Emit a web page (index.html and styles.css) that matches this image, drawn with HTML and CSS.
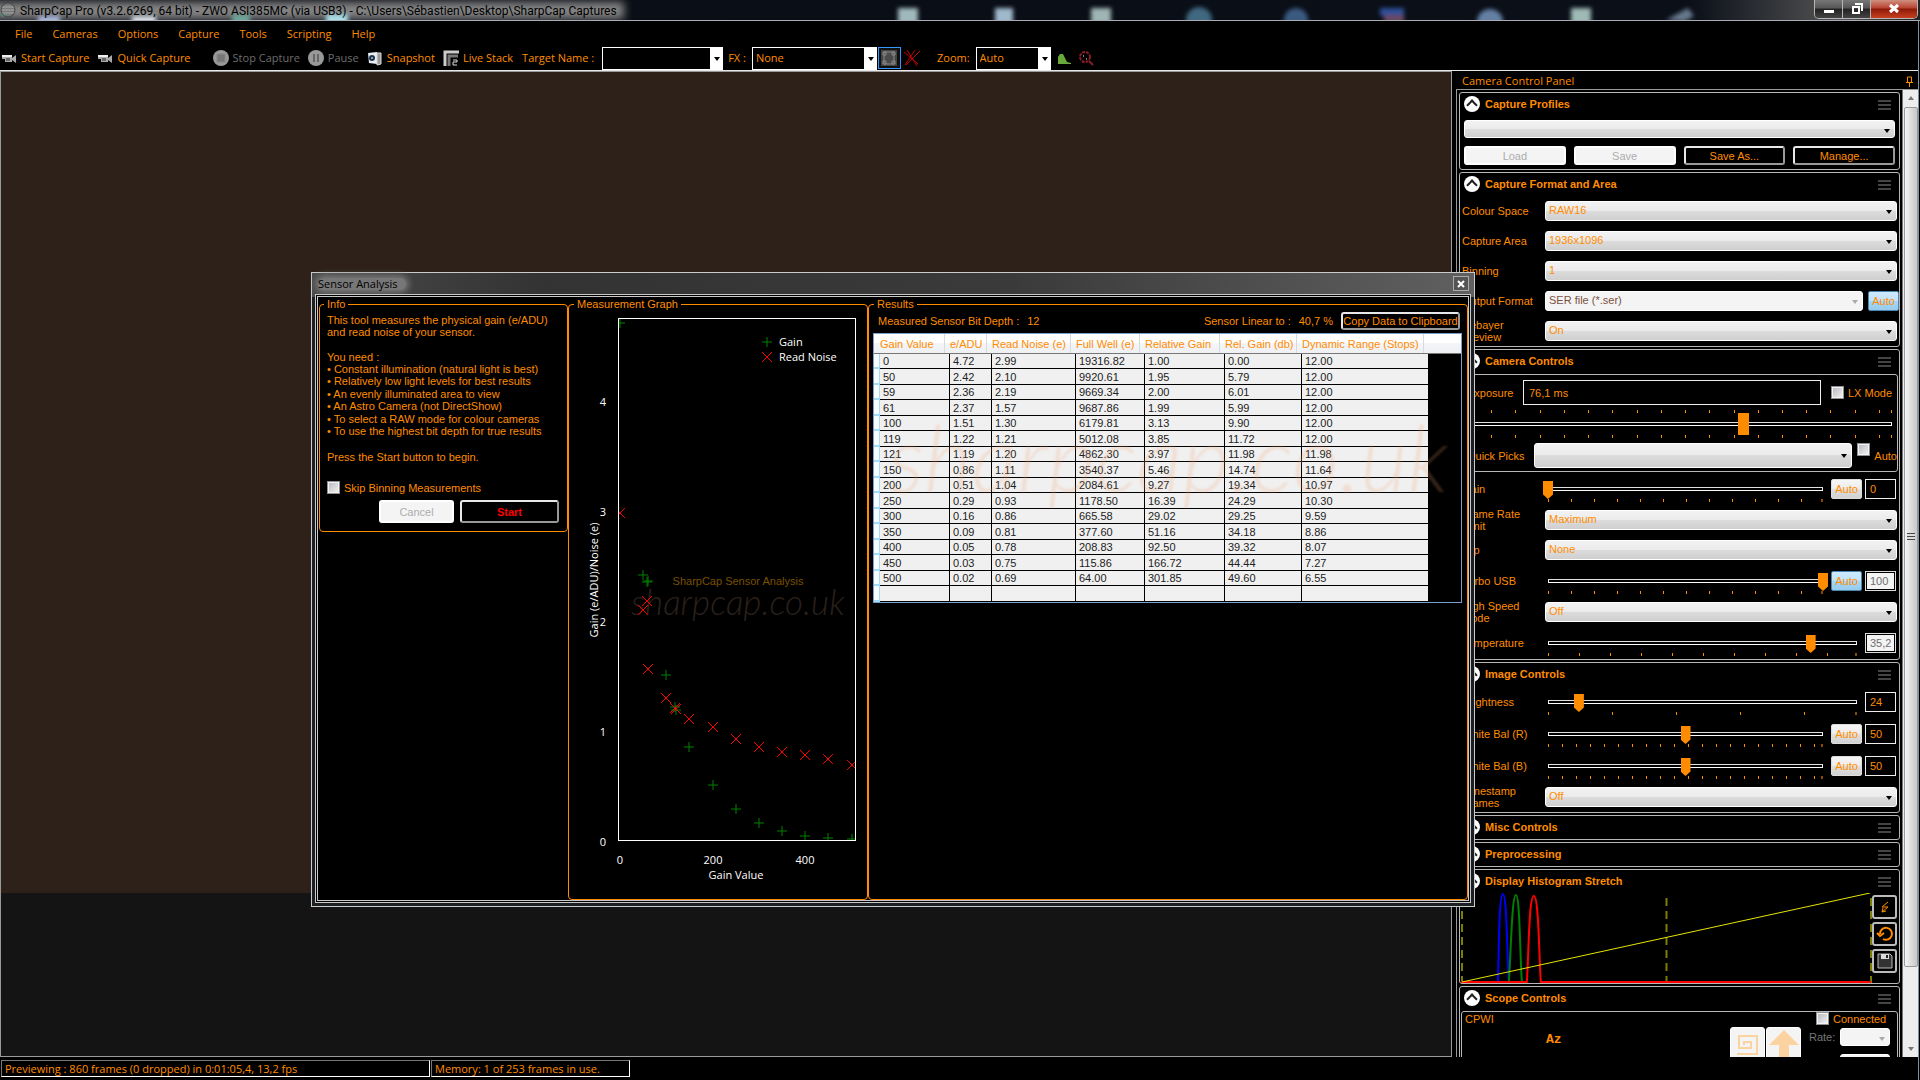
FILE: index.html
```html
<!DOCTYPE html>
<html lang="en">
<head>
    <meta charset="UTF-8">
    <meta name="viewport" content="width=device-width, initial-scale=1.0">
    <title>SharpCap Pro</title>
    <link rel="stylesheet" href="styles.css">
</head>
<body>

<header class="titlebar">
    <svg class="desktop-glow" width="100%" height="20">
        <defs><filter id="soft"><feGaussianBlur stdDeviation="2"/></filter></defs>
        <g filter="url(#soft)">
            <rect x="38" y="16" width="22" height="10" fill="#aab8e0"/>
            <rect x="132" y="16" width="24" height="10" fill="#d8dfe8"/>
            <rect x="232" y="14" width="18" height="12" fill="#6ea39a"/>
            <rect x="326" y="14" width="22" height="12" fill="#a9dde6"/>
            <rect x="898" y="8" width="20" height="16" fill="#9fb9bd"/>
            <rect x="995" y="8" width="18" height="16" fill="#9fb9cc"/>
            <rect x="1091" y="8" width="20" height="16" fill="#9fb5b3"/>
            <circle cx="1199" cy="20" r="13" fill="#3f6780"/>
            <circle cx="1296" cy="20" r="12" fill="#3b5a80"/>
            <rect x="1380" y="8" width="24" height="8" fill="#2f4f9a"/>
            <rect x="1384" y="15" width="20" height="8" fill="#6a4a60"/>
            <circle cx="1490" cy="22" r="13" fill="#6480a4"/>
            <rect x="1571" y="8" width="20" height="16" fill="#9fb9b5"/>
            <path d="M1666 20l22-12 6 8-10 6z" fill="#66788c"/>
        </g>
    </svg>
    <svg class="app-icon" width="16" height="16" viewBox="0 0 16 16">
        <circle cx="8" cy="8" r="7" fill="#777"/>
        <path d="M2 5h12M1 8h14M2 11h12" stroke="#aaa"/>
        <path d="M1 11l5 1-3 3z" fill="#4fa08a"/>
        <circle cx="8" cy="8" r="7" fill="none" stroke="#444"/>
    </svg>
    <span class="title-text">SharpCap Pro (v3.2.6269, 64 bit) - ZWO ASI385MC (via USB3) - C:\Users\Sébastien\Desktop\SharpCap Captures</span>
    <div class="window-buttons">
        <button class="win-btn" aria-label="Minimize"><svg width="12" height="12"><rect x="1" y="7" width="10" height="3" fill="#fff"/></svg></button>
        <button class="win-btn" aria-label="Restore"><svg width="12" height="12"><path d="M4 1h7v7M2 4h6v6H2z" fill="none" stroke="#fff" stroke-width="2"/></svg></button>
        <button class="win-btn win-close" aria-label="Close"><svg width="12" height="12"><path d="M2 2l8 7M10 2l-8 7" stroke="#fff" stroke-width="3"/></svg></button>
    </div>
</header>

<div class="app">
    <nav class="menu">
        <a href="#">File</a>
        <a href="#">Cameras</a>
        <a href="#">Options</a>
        <a href="#">Capture</a>
        <a href="#">Tools</a>
        <a href="#">Scripting</a>
        <a href="#">Help</a>
    </nav>

    <div class="toolbar">
        <button class="tool"><svg width="16" height="16"><path d="M1 5h10v7H4V9H1zM11 8l4-3v8l-4-3z" fill="#aaa"/><path d="M5 8h4v3H5z" fill="#666"/><path d="M1 5h10v2H1z" fill="#eee"/></svg>Start Capture</button>
        <button class="tool tool-quick"><svg width="16" height="16"><path d="M1 5h10v7H4V9H1zM11 8l4-3v8l-4-3z" fill="#aaa"/><path d="M5 8h4v3H5z" fill="#666"/><path d="M1 5h10v2H1z" fill="#eee"/></svg>Quick Capture</button>
        <button class="tool" disabled><svg width="16" height="16"><circle cx="8" cy="8" r="8" fill="#999"/><path d="M4 4h8v8H4z" fill="#777" stroke="#888"/></svg>Stop Capture</button>
        <button class="tool" disabled><svg width="16" height="16"><circle cx="8" cy="8" r="8" fill="#999"/><path d="M6 4v8M10 4v8" stroke="#666" stroke-width="2"/></svg>Pause</button>
        <button class="tool"><svg width="16" height="16"><path d="M1 3l9-1v12l-8-1z" fill="#e8eef4"/><path d="M10 3h4v11l-4 1z" fill="#999" stroke="#ddd"/><circle cx="5" cy="8" r="3" fill="#234"/><circle cx="5" cy="8" r="1" fill="#8bf"/></svg>Snapshot</button>
        <button class="tool"><svg width="16" height="16"><path d="M2 16V2h14" fill="none" stroke="#ccc" stroke-width="3"/><path d="M6 16V6h9" fill="none" stroke="#777" stroke-width="3"/><path d="M10 10h4v2h-4v3h4" fill="none" stroke="#ddd"/></svg>Live Stack</button>
        <label class="tool-label label-target" for="target">Target Name :</label>
        <span class="combo combo-target"><select id="target"><option></option></select></span>
        <label class="tool-label" for="fx">FX :</label>
        <span class="combo combo-fx"><select id="fx"><option>None</option></select></span>
        <button class="tool-toggle" aria-label="Selection area"><svg width="16" height="16"><path d="M0 0h16v16H0z" fill="#444"/><path d="M3 2h10v12H3z" fill="#4a4a4a" stroke="#888"/><path d="M2 2h3v3H2zM11 2h3v3h-3zM2 11h3v3H2zM11 11h3v3h-3z" fill="none" stroke="#888"/></svg></button>
        <button class="tool-icon" aria-label="Clear"><svg width="18" height="18"><path d="M1 3l14 12M4 1l10 16M12 1L2 16M17 2L3 16" stroke="#c00000" fill="none"/></svg></button>
        <label class="tool-label label-zoom" for="zoom">Zoom:</label>
        <span class="combo combo-zoom"><select id="zoom"><option>Auto</option></select></span>
        <button class="tool-icon icon-hist" aria-label="Histogram"><svg width="14" height="14"><path d="M0 13V6l2-3h3l2 4 2 4 4 1v1z" fill="#6aa83a"/></svg></button>
        <button class="tool-icon" aria-label="Reticle"><svg width="16" height="16"><circle cx="7" cy="7" r="5" fill="none" stroke="#8a1c28" stroke-dasharray="3 1" stroke-width="2"/><path d="M11 11l4 4" stroke="#8a1c28" stroke-width="2"/><path d="M5 6h1M8 9h1" stroke="#fff"/></svg></button>
    </div>

    <main class="workspace">
        <section class="preview"><div class="frame"></div></section>

        <aside class="panel">
            <div class="panel-head">
                <span>Camera Control Panel</span>
                <svg width="9" height="11"><path d="M2.5 1h4v5.5h-4zM1 6.5h7M4.5 7v4" fill="none" stroke="#ff8c00"/></svg>
            </div>
            <div class="panel-body">
                <div class="sections">
                    <section class="card">
                        <div class="card-head"><i class="toggle"></i><h2>Capture Profiles</h2><i class="burger"></i></div>
                        <div class="profiles">
                            <span class="select"><select aria-label="Capture profile"><option></option></select></span>
                            <div class="profile-buttons">
                                <button class="btn" disabled>Load</button>
                                <button class="btn" disabled>Save</button>
                                <button class="btn">Save As...</button>
                                <button class="btn">Manage...</button>
                            </div>
                        </div>
                    </section>

                    <section class="card">
                        <div class="card-head"><i class="toggle"></i><h2>Capture Format and Area</h2><i class="burger"></i></div>
                        <div class="row"><label for="colour">Colour Space</label><span class="select"><select id="colour"><option>RAW16</option></select></span></div>
                        <div class="row"><label for="area">Capture Area</label><span class="select"><select id="area"><option>1936x1096</option></select></span></div>
                        <div class="row"><label for="binning">Binning</label><span class="select"><select id="binning"><option>1</option></select></span></div>
                        <div class="row row-output"><label for="format">Output Format</label><span class="select"><select id="format" disabled><option>SER file (*.ser)</option></select></span><button class="auto on">Auto</button></div>
                        <div class="row"><label for="debayer">Debayer Preview</label><span class="select"><select id="debayer"><option>On</option></select></span></div>
                    </section>

                    <section class="card">
                        <div class="card-head"><i class="toggle"></i><h2>Camera Controls</h2><i class="burger"></i></div>
                        <div class="group">
                            <div class="exposure">
                                <label for="exposure">Exposure</label>
                                <input type="text" id="exposure" value="76,1 ms">
                                <input type="checkbox" id="lx"><label for="lx">LX Mode</label>
                            </div>
                            <div class="exposure-slider">
                                <div class="ticks"></div>
                                <input type="range" aria-label="Exposure" min="0" max="1000" value="651">
                                <div class="ticks"></div>
                            </div>
                            <div class="quick">
                                <label for="quick">Quick Picks</label>
                                <span class="select"><select id="quick"><option></option></select></span>
                                <input type="checkbox" id="expauto"><label for="expauto">Auto</label>
                            </div>
                        </div>
                        <div class="row row-slider"><label for="gain">Gain</label><div class="slider step-23"><input type="range" id="gain" max="500" value="0"><div class="ticks"></div></div><button class="auto">Auto</button><input type="text" class="value" aria-label="Gain value" value="0"></div>
                        <div class="row"><label for="rate-limit">Frame Rate<br>Limit</label><span class="select"><select id="rate-limit"><option>Maximum</option></select></span></div>
                        <div class="row"><label for="flip">Flip</label><span class="select"><select id="flip"><option>None</option></select></span></div>
                        <div class="row row-slider"><label for="usb">Turbo USB</label><div class="slider step-23"><input type="range" id="usb" max="100" value="100"><div class="ticks"></div></div><button class="auto on">Auto</button><input type="text" class="value" aria-label="Turbo USB value" value="100" disabled></div>
                        <div class="row"><label for="speed">High Speed<br>Mode</label><span class="select"><select id="speed"><option>Off</option></select></span></div>
                        <div class="row row-slider"><label for="temp">Temperature</label><div class="slider step-31"><input type="range" id="temp" max="100" value="85"><div class="ticks"></div></div><input type="text" class="value" aria-label="Temperature value" value="35,2" disabled></div>
                    </section>

                    <section class="card">
                        <div class="card-head"><i class="toggle"></i><h2>Image Controls</h2><i class="burger"></i></div>
                        <div class="row row-slider"><label for="bright">Brightness</label><div class="slider step-64"><input type="range" id="bright" max="240" value="24"><div class="ticks"></div></div><input type="text" class="value" aria-label="Brightness value" value="24"></div>
                        <div class="row row-slider"><label for="wbr">White Bal (R)</label><div class="slider step-14"><input type="range" id="wbr" max="100" value="50"><div class="ticks"></div></div><button class="auto">Auto</button><input type="text" class="value" aria-label="White Bal (R) value" value="50"></div>
                        <div class="row row-slider"><label for="wbb">White Bal (B)</label><div class="slider step-14"><input type="range" id="wbb" max="100" value="50"><div class="ticks"></div></div><button class="auto">Auto</button><input type="text" class="value" aria-label="White Bal (B) value" value="50"></div>
                        <div class="row"><label for="stamp">Timestamp<br>Frames</label><span class="select"><select id="stamp"><option>Off</option></select></span></div>
                    </section>

                    <section class="card"><div class="card-head"><i class="toggle"></i><h2>Misc Controls</h2><i class="burger"></i></div></section>
                    <section class="card"><div class="card-head"><i class="toggle"></i><h2>Preprocessing</h2><i class="burger"></i></div></section>

                    <section class="card">
                        <div class="card-head"><i class="toggle"></i><h2>Display Histogram Stretch</h2><i class="burger"></i></div>
                        <div class="histogram">
                            <svg class="hist-plot" viewBox="0 0 412 90" preserveAspectRatio="none">
                                <path d="M1 91V0M206 91V0M411 91V0" stroke="#7d7d00" stroke-width="2" stroke-dasharray="8 5"/>
                                <path d="M37 89C38 60 38 1 42 1S46 60 48 89" fill="none" stroke="#0000ff" stroke-width="2"/>
                                <path d="M48 89C50 60 51 2 55 2S59 60 61 89" fill="none" stroke="#008000" stroke-width="2"/>
                                <path d="M0 89H66C68 60 68 3 73 3S78 60 80 89H411" fill="none" stroke="#ff0000" stroke-width="2"/>
                                <path d="M1 89L410 0" stroke="#e6e600"/>
                            </svg>
                            <div class="hist-buttons">
                                <button aria-label="Auto stretch"><svg width="16" height="16"><path d="M11 3L5 8h6L5 13M5 13l1-4M5 13l4-1" fill="none" stroke="#ff8c00"/></svg></button>
                                <button aria-label="Reset stretch"><svg width="18" height="18"><path d="M4 9a6 6 0 1 1 3 5" fill="none" stroke="#ff8c00" stroke-width="2"/><path d="M1 8l3 3 4-3" fill="none" stroke="#ff8c00" stroke-width="2"/></svg></button>
                                <button aria-label="Save stretch"><svg width="16" height="16"><path d="M1 1h12l2 2v12H1z" fill="#333" stroke="#bbb" stroke-width="1"/><path d="M4 1h8v5H4z" fill="#ddd"/><path d="M9 2h2v3H9z" fill="#222"/></svg></button>
                            </div>
                        </div>
                    </section>

                    <section class="card">
                        <div class="card-head"><i class="toggle"></i><h2>Scope Controls</h2><i class="burger"></i></div>
                        <div class="group scope">
                            <div class="scope-left">
                                <span>CPWI</span>
                                <b class="az">Az</b>
                            </div>
                            <div class="scope-pad">
                                <button aria-label="Spiral" disabled><svg width="22" height="22"><path d="M0 20h20V2H2v12h12V8H7v3" fill="none" stroke="#fad3a0" stroke-width="2"/></svg></button>
                                <button aria-label="Up" disabled><svg width="30" height="30"><path d="M15 0l15 15H20v15H10V15H0z" fill="#fad3a0"/></svg></button>
                            </div>
                            <div class="scope-right">
                                <span class="connected"><input type="checkbox" id="conn"><label for="conn">Connected</label></span>
                                <span class="rate"><label for="rate">Rate:</label><span class="select"><select id="rate" disabled><option></option></select></span></span>
                                <span class="select rate-more"><select aria-label="Rate axis" disabled><option></option></select></span>
                            </div>
                        </div>
                    </section>
                </div>
                <div class="scrollbar"><i class="arrow up"></i><div class="scroll-thumb"></div><i class="arrow down"></i></div>
            </div>
        </aside>
    </main>

    <footer class="status">
        <span class="status-box status-frames">Previewing : 860 frames (0 dropped) in 0:01:05,4, 13,2 fps</span>
        <span class="status-box status-memory">Memory: 1 of 253 frames in use.</span>
    </footer>
</div>

<div class="dialog" role="dialog" aria-label="Sensor Analysis">
    <div class="dialog-title"><span>Sensor Analysis</span><button aria-label="Close"><svg width="8" height="8"><path d="M1 1l6 6M7 1L1 7" stroke="#fff" stroke-width="2"/></svg></button></div>
    <div class="dialog-body">
        <fieldset class="info">
            <legend>Info</legend>
            <p>This tool measures the physical gain (e/ADU)<br>and read noise of your sensor.</p>
            <p class="need">You need :</p>
            <ul>
                <li>• Constant illumination (natural light is best)</li>
                <li>• Relatively low light levels for best results</li>
                <li>• An evenly illuminated area to view</li>
                <li>• An Astro Camera (not DirectShow)</li>
                <li>• To select a RAW mode for colour cameras</li>
                <li>• To use the highest bit depth for true results</li>
            </ul>
            <p class="press">Press the Start button to begin.</p>
            <div class="skip"><input type="checkbox" id="skip"><label for="skip">Skip Binning Measurements</label></div>
            <div class="info-buttons"><button class="btn cancel" disabled>Cancel</button><button class="btn start">Start</button></div>
        </fieldset>

        <fieldset class="graph">
            <legend>Measurement Graph</legend>
            <svg id="graph" width="298" height="586">
                <defs><clipPath id="plot"><rect x="50" y="9" width="236" height="521"/></clipPath></defs>
                <text class="mark-small" x="169" y="275">SharpCap Sensor Analysis</text>
                <text class="mark" x="169" y="305">sharpcap.co.uk</text>
                <rect x="49" y="8" width="237" height="522" fill="none" stroke="#fff" shape-rendering="crispEdges"/>
                <text x="34" y="536">0</text>
                <text x="34" y="426">1</text>
                <text x="34" y="316">2</text>
                <text x="34" y="206">3</text>
                <text x="34" y="96">4</text>
                <text x="51" y="554">0</text>
                <text x="144" y="554">200</text>
                <text x="236" y="554">400</text>
                <text x="167" y="569">Gain Value</text>
                <text transform="translate(29 270) rotate(-90)">Gain (e/ADU)/Noise (e)</text>
                <path class="gain" d="M193 32h10M198 27v10"/>
                <text class="key" x="210" y="36">Gain</text>
                <path class="noise" d="M193 42l10 10M203 42l-10 10"/>
                <text class="key" x="210" y="51">Read Noise</text>
                <g id="points" clip-path="url(#plot)"></g>
            </svg>
        </fieldset>

        <fieldset class="results">
            <legend>Results</legend>
            <div class="results-head">
                <span>Measured Sensor Bit Depth :</span><span>12</span>
                <span class="linear">Sensor Linear to :</span><span>40,7 %</span>
                <button class="btn copy">Copy Data to Clipboard</button>
            </div>
            <div class="table-frame">
                <table>
                    <colgroup><col class="c-head"><col class="c-gain"><col class="c-adu"><col class="c-noise"><col class="c-well"><col class="c-rel"><col class="c-db"><col class="c-range"><col></colgroup>
                    <thead><tr><th></th><th>Gain Value</th><th>e/ADU</th><th>Read Noise (e)</th><th>Full Well (e)</th><th>Relative Gain</th><th>Rel. Gain (db)</th><th>Dynamic Range (Stops)</th><th></th></tr></thead>
                    <tbody id="rows"></tbody>
                </table>
                <div class="table-mark">sharpcap.co.uk</div>
            </div>
        </fieldset>
    </div>
</div>

<script src="script.js"></script>
</body>
</html>
```
FILE: styles.css
```css
* {
    box-sizing: border-box;
}
body {
    margin: 0;
    height: 100vh;
    display: flex;
    flex-direction: column;
    overflow: hidden;
    background: #000;
    color: #ff8c00;
    font-family: "Liberation Sans", Arial, sans-serif;
    font-size: 11px;
    line-height: 12px;
}
button, input, select {
    font: inherit;
    color: inherit;
    margin: 0;
    padding: 0;
}
a {
    color: inherit;
    text-decoration: none;
}
svg {
    display: block;
}

/* title bar */
.titlebar {
    position: relative;
    flex: none;
    height: 21px;
    display: flex;
    align-items: center;
    gap: 4px;
    background: linear-gradient(90deg, #0a0d14 0, #0a0f18 80%, #0a0f18 88%, #555 96%, #222 100%);
    border-bottom: 1px solid #a9adb3;
    overflow: hidden;
}
.titlebar::before {
    content: "";
    position: absolute;
    left: -10px;
    top: 2px;
    width: 634px;
    height: 17px;
    background: #868686;
    filter: blur(4px);
}
.desktop-glow {
    position: absolute;
    left: 0;
    top: 0;
}
.app-icon, .title-text, .window-buttons {
    position: relative;
}
.title-text {
    color: #000;
    flex: 1;
    white-space: nowrap;
    font-family: Roboto, sans-serif;
    font-size: 12px;
    line-height: 16px;
    margin-top: 2px;
}
.window-buttons {
    display: flex;
    align-self: flex-start;
    height: 19px;
    margin-right: 2px;
    border: 1px solid #b5b5b5;
    border-top: 0;
    border-radius: 0 0 5px 5px;
    overflow: hidden;
}
.win-btn {
    width: 28px;
    border: 0;
    border-right: 1px solid #b5b5b5;
    display: flex;
    align-items: center;
    justify-content: center;
    background: linear-gradient(#777 0, #555 45%, #222 50%, #444 100%);
}
.win-close {
    width: 46px;
    border-right: 0;
    background: linear-gradient(#d09080 0, #b84030 45%, #8c1a08 50%, #c84020 100%);
}

/* menu and toolbar */
.app {
    flex: 1;
    min-height: 0;
    display: flex;
    flex-direction: column;
    margin-right: 1px;
    border-right: 1px solid #7f93a8;
}
.menu {
    flex: none;
    height: 25px;
    display: flex;
    align-items: center;
    gap: 20px;
    padding-left: 15px;
    font-family: "Open Sans", sans-serif;
    line-height: 16px;
}
.toolbar {
    flex: none;
    height: 25px;
    display: flex;
    align-items: center;
    padding-left: 1px;
    border-bottom: 1px solid #e8e8e8;
    font-family: "Open Sans", sans-serif;
    white-space: nowrap;
}
.tool {
    display: flex;
    align-items: center;
    gap: 4px;
    margin-right: 8px;
    border: 0;
    background: none;
}
.tool-quick {
    margin-right: 22px;
}
.tool:disabled {
    color: #6d6d6d;
}
.tool-label {
    margin-right: 6px;
}
.label-target {
    margin-left: 1px;
    margin-right: 8px;
}
.label-zoom {
    margin-left: 16px;
}
.combo {
    position: relative;
    height: 23px;
    margin-right: 5px;
}
.combo-target { width: 121px; }
.combo-fx { width: 125px; margin-right: 1px; }
.combo-zoom { width: 75px; }
.combo select {
    appearance: none;
    width: 100%;
    height: 100%;
    background: #000;
    border: 1px solid #fff;
    border-right-width: 13px;
    border-radius: 0;
    padding-left: 3px;
}
.combo::after, .select::after {
    content: "";
    position: absolute;
    right: 3px;
    top: 10px;
    border: 3px solid transparent;
    border-top: 4px solid #000;
    border-bottom: 0;
    pointer-events: none;
}
.tool-toggle {
    width: 23px;
    height: 22px;
    border: 1px solid #3399ff;
    background: #111;
    display: flex;
    align-items: center;
    justify-content: center;
}
.tool-icon {
    border: 0;
    background: none;
    margin-left: 2px;
}
.icon-hist {
    margin-right: 4px;
}

/* workspace */
.workspace {
    flex: 1;
    min-height: 0;
    display: flex;
    gap: 4px;
}
.preview {
    flex: 1;
    min-width: 0;
    background: #141414;
    border: 1px solid #9a9a9a;
    overflow: hidden;
}
.frame {
    aspect-ratio: 1936 / 1096;
    background: #2d211a;
}
.panel {
    width: 462px;
    display: flex;
    flex-direction: column;
}
.panel-head {
    flex: none;
    height: 18px;
    padding: 2px 4px 0 6px;
    display: flex;
    align-items: center;
    justify-content: space-between;
    font-family: "Open Sans", sans-serif;
}
.panel-body {
    flex: 1;
    min-height: 0;
    display: flex;
    border-top: 1px solid #9a9a9a;
    border-left: 1px solid #9a9a9a;
}
.sections {
    flex: 1;
    min-width: 0;
    display: flex;
    flex-direction: column;
    gap: 2px;
    padding: 2px 2px 0 2px;
    overflow: hidden;
    border-right: 1px solid #777;
}
.card {
    flex: none;
    border: 1px solid #b8b8b8;
    border-radius: 3px;
}
.card-head {
    height: 23px;
    display: flex;
    align-items: center;
    padding: 0 8px 2px 4px;
}
.card-head h2 {
    flex: 1;
    margin: 0;
    font-size: 11px;
    line-height: 12px;
}
.toggle {
    width: 16px;
    height: 16px;
    margin-right: 5px;
    border-radius: 50%;
    background: #fff;
    display: flex;
    align-items: center;
    justify-content: center;
}
.toggle::before {
    content: "";
    width: 6px;
    height: 6px;
    margin-top: 3px;
    border-top: 2px solid #222;
    border-left: 2px solid #222;
    transform: rotate(45deg);
}
.burger {
    width: 13px;
    height: 10px;
    margin-top: 2px;
    border-top: 2px solid #444;
    border-bottom: 2px solid #444;
    background: linear-gradient(#444, #444) center / 100% 2px no-repeat;
}
.profiles {
    padding: 4px;
    display: flex;
    flex-direction: column;
    gap: 8px;
}
.profiles .select {
    flex: none;
    height: 18px;
}
.profile-buttons {
    display: grid;
    grid-template-columns: repeat(4, 1fr);
    gap: 8px;
    height: 19px;
}
.btn {
    border: 2px solid #ccc;
    border-color: #e8e8e8 #999 #999 #e8e8e8;
    border-radius: 3px;
    background: #000;
    padding: 0;
}
.btn:disabled {
    background: #f4f4f4;
    border-color: #fff;
    color: #adadad;
}

/* control rows */
.row {
    min-height: 30px;
    display: flex;
    align-items: center;
    padding: 0 2px;
}
.row-slider {
    min-height: 32px;
    gap: 3px;
    padding-right: 3px;
}
.row > label {
    flex: none;
    width: 83px;
    padding-right: 10px;
}
.row-slider > label {
    width: 78px;
    padding-right: 0;
}
.row-output {
    gap: 5px;
    padding-right: 0;
}
.row-output > label {
    width: 78px;
    padding-right: 0;
}
.select {
    position: relative;
    flex: 1;
    height: 20px;
}
.select select {
    appearance: none;
    display: block;
    width: 100%;
    height: 100%;
    border: 1px solid #fff;
    border-radius: 3px;
    background: linear-gradient(#f2f2f2 0, #ebebeb 48%, #dcdcdc 50%, #cfcfcf 100%);
    padding: 0 4px 2px 3px;
}
.select select:disabled {
    background: #f4f4f4;
    color: #7a5040;
    opacity: 1;
}
.select::after {
    right: 5px;
    top: 9px;
}
.row-output .select::after {
    border-top-color: #aaa;
}
.auto {
    flex: none;
    width: 31px;
    height: 20px;
    border: 1px solid #ddd;
    border-radius: 2px;
    background: linear-gradient(#f6f6f6 0, #ececec 50%, #dedede 52%, #d2d2d2 100%);
}
.auto.on {
    border-color: #4a86b0;
    background: linear-gradient(#cfeafc 0, #c0e2f8 50%, #a4d6f4 52%, #98ccee 100%);
}
.value {
    flex: none;
    width: 31px;
    height: 20px;
    border: 1px solid #eee;
    background: #000;
    padding: 0 4px;
}
.value:disabled {
    background: #f4f4f4;
    border: 1px solid #ddd;
    outline: 1px solid #000;
    outline-offset: -2px;
    color: #6d6d6d;
}
.slider {
    flex: 1;
    height: 21px;
    margin-top: 5px;
}
input[type="range"] {
    appearance: none;
    display: block;
    width: 100%;
    height: 18px;
    background:
        linear-gradient(#000, #000) center 7px / calc(100% - 12px) 2px no-repeat,
        linear-gradient(#ddd, #fff) center 6px / calc(100% - 10px) 4px no-repeat;
}
input[type="range"]::-webkit-slider-thumb {
    appearance: none;
    width: 10px;
    height: 18px;
    background: #ff8c00;
    clip-path: polygon(0 0, 100% 0, 100% 75%, 50% 100%, 0 75%);
}
.ticks {
    height: 3px;
    margin: 0 5px;
    background: repeating-linear-gradient(90deg, #ff8c00 0 1px, transparent 1px var(--step));
    border-right: 2px solid #8a4b00;
}
.step-14 { --step: 14px; }
.step-23 { --step: 23px; }
.step-31 { --step: 31px; }
.step-64 { --step: 64px; }

.group {
    margin: 1px 1px;
    border: 1px solid #b8b8b8;
    border-radius: 3px;
}
.exposure {
    display: flex;
    align-items: center;
    padding: 5px 5px 5px 0;
}
.exposure > label:first-child {
    width: 61px;
    padding-left: 5px;
}
.exposure input[type="text"] {
    flex: 1;
    min-width: 0;
    height: 25px;
    margin-right: 10px;
    border: 1px solid #eee;
    background: #000;
    padding-left: 5px;
}
input[type="checkbox"] {
    appearance: none;
    flex: none;
    width: 13px;
    height: 13px;
    border: 1px solid #8e8f8f;
    outline: 1px solid #f4f4f4;
    outline-offset: -2px;
    background: linear-gradient(135deg, #b5b8be, #f4f4f4);
    margin-right: 4px;
}
.exposure-slider {
    --step: calc(200% / 35);
}
.exposure-slider input[type="range"] {
    height: 22px;
    background-position: center 10px, center 9px;
}
.exposure-slider input[type="range"]::-webkit-slider-thumb {
    width: 11px;
    height: 22px;
    clip-path: none;
}
.exposure-slider .ticks {
    border-right: 1px solid #ff8c00;
}
.quick {
    display: flex;
    align-items: center;
    padding: 5px 0 3px 0;
}
.quick > label:first-child {
    width: 72px;
    padding-left: 5px;
}
.quick .select {
    height: 25px;
    margin-right: 5px;
}
.quick .select::after {
    top: 11px;
}
.quick input {
    align-self: flex-start;
}

/* histogram */
.histogram {
    height: 90px;
    display: flex;
    padding-left: 1px;
}
.hist-plot {
    flex: 1;
    min-width: 0;
    height: 90px;
}
.hist-buttons {
    width: 27px;
    padding: 2px 2px 0 0;
    display: flex;
    flex-direction: column;
    gap: 3px;
}
.hist-buttons button {
    height: 24px;
    border: 2px solid #bbb;
    border-radius: 3px;
    background: #000;
    display: flex;
    align-items: center;
    justify-content: center;
}

/* scope */
.scope {
    display: flex;
    min-height: 120px;
}
.scope-left {
    flex: 1;
    padding: 1px 3px;
}
.az {
    display: block;
    margin: 9px 0 0 81px;
    font-family: "Liberation Mono", monospace;
    font-size: 13px;
}
.scope-pad {
    display: flex;
    gap: 1px;
    padding-top: 15px;
}
.scope-pad button {
    width: 35px;
    height: 35px;
    border: 1px solid #fff;
    border-radius: 3px;
    background: #f4f4f4;
    display: flex;
    align-items: center;
    justify-content: center;
}
.scope-right {
    width: 96px;
    padding: 0 7px 0 8px;
    display: flex;
    flex-direction: column;
}
.connected, .rate {
    display: flex;
    align-items: center;
}
.connected {
    padding-left: 7px;
    margin-bottom: 3px;
}
.rate label {
    width: 31px;
    color: #777;
}
.rate .select {
    height: 18px;
}
.rate .select::after {
    border-top-color: #aaa;
}
.rate-more {
    flex: none;
    height: 18px;
    margin: 8px 0 0 31px;
}

/* scrollbar */
.scrollbar {
    width: 15px;
    padding: 6px 0;
    background: #ededed;
    display: flex;
    flex-direction: column;
    align-items: center;
    gap: 7px;
}
.arrow {
    border: 3px solid transparent;
}
.up {
    border-top: 0;
    border-bottom: 4px solid #777;
}
.down {
    margin-top: auto;
    border-bottom: 0;
    border-top: 4px solid #777;
}
.scroll-thumb {
    width: 14px;
    height: 90%;
    border: 1px solid #999;
    border-radius: 2px;
    background:
        repeating-linear-gradient(#444 0 1px, #ddd 1px 3px) center / 8px 7px no-repeat,
        linear-gradient(90deg, #f5f5f5, #d8d8d8 60%, #c8c8c8);
}

/* status bar */
.status {
    flex: none;
    height: 23px;
    display: flex;
    gap: 1px;
    padding: 3px 0 3px 1px;
    font-family: "Open Sans", sans-serif;
}
.status-box {
    height: 17px;
    line-height: 15px;
    padding-left: 3px;
    border: 1px solid #fff;
    border-top-color: #777;
    border-left-color: #777;
}
.status-frames { width: 429px; }
.status-memory { width: 199px; }

/* sensor analysis window */
.dialog {
    position: absolute;
    left: 311px;
    top: 272px;
    width: 1164px;
    height: 635px;
    padding: 0 3px 3px 3px;
    border: 1px solid #c8cccc;
    background: linear-gradient(90deg, #4a4a4a, #333 20%, #3a3a3a 60%, #606060 100%) top / 100% 24px no-repeat, #1c2022;
    display: flex;
    flex-direction: column;
}
.dialog-title {
    flex: none;
    height: 21px;
    display: flex;
    align-items: center;
    justify-content: space-between;
    padding-left: 3px;
    padding-right: 2px;
    color: #000;
    font-family: "Open Sans", sans-serif;
}
.dialog-title span {
    padding: 0 8px 0 0;
    border-radius: 6px;
    background: #777;
    box-shadow: 0 0 6px 3px #777;
}
.dialog-title button {
    width: 16px;
    height: 15px;
    border: 1px solid #aaa;
    background: #555;
    display: flex;
    align-items: center;
    justify-content: center;
}
.dialog-body {
    flex: 1;
    min-height: 0;
    display: grid;
    grid-template-columns: 249px 300px 1fr;
    align-items: stretch;
    padding: 1px 0 0 1px;
    background: #000;
    border: 3px double #c8c8c8;
}
fieldset {
    min-width: 0;
    margin: 0;
    padding: 0;
    border: 1px solid #ff8c00;
    border-radius: 4px;
}
legend {
    margin-left: 5px;
    padding: 0 3px;
}
.info {
    align-self: start;
    padding: 4px 8px 8px 7px;
}
.info legend {
    margin-left: -3px;
}
.info p, .info ul {
    margin: 0;
    padding: 0;
    list-style: none;
    white-space: nowrap;
}
.info .need {
    margin-top: 13px;
}
.info li:nth-child(even) {
    line-height: 13px;
}
.info .press {
    margin-top: 13px;
}
.skip {
    display: flex;
    align-items: center;
    margin-top: 18px;
}
.info-buttons {
    display: flex;
    justify-content: flex-end;
    gap: 6px;
    height: 23px;
    margin-top: 6px;
}
.cancel { width: 75px; }
.start {
    width: 99px;
    color: #ff0000;
    font-weight: bold;
}

.graph text {
    fill: #fff;
    font-family: "Open Sans", sans-serif;
    font-size: 11px;
    text-anchor: middle;
}
.graph .key {
    text-anchor: start;
}
.graph .mark-small {
    fill: #7a5000;
    font-family: "Liberation Sans", sans-serif;
}
.graph .mark {
    fill: #2b211b;
    font-family: Lato, sans-serif;
    font-style: italic;
    font-weight: 300;
    font-size: 35px;
}
.gain {
    stroke: #008000;
    fill: none;
}
.noise {
    stroke: #ff0000;
    fill: none;
}

.results {
    padding: 2px 5px 0 4px;
}
.results legend {
    margin-left: 1px;
}
.results-head {
    display: flex;
    align-items: center;
    gap: 8px;
    height: 18px;
    padding: 0 2px 0 5px;
    margin-bottom: 3px;
}
.linear {
    margin-left: auto;
}
.copy {
    height: 18px;
    width: 119px;
    white-space: nowrap;
}
.table-frame {
    position: relative;
    border: 1px solid #7ba0cc;
    overflow: hidden;
}
table {
    width: 100%;
    table-layout: fixed;
    border-collapse: separate;
    border-spacing: 0;
    white-space: nowrap;
}
.c-head { width: 6px; }
.c-gain { width: 70px; }
.c-adu { width: 42px; }
.c-noise { width: 84px; }
.c-well { width: 69px; }
.c-rel { width: 80px; }
.c-db { width: 77px; }
.c-range { width: 127px; }
th {
    position: relative;
    height: 20px;
    padding: 0;
    text-align: left;
    font-weight: normal;
    background: linear-gradient(#fff 0, #fff 45%, #f4f5f8 50%, #eef0f4 100%);
    border-bottom: 1px solid #777;
}
/* header dividers sit left of the column lines */
th:nth-child(n+3)::before {
    content: "";
    position: absolute;
    left: -6px;
    top: 0;
    height: 19px;
    border-left: 1px solid #d8dade;
}
td {
    height: 15px;
    padding: 0 0 0 3px;
    color: #222;
    background: #f0f0f0;
    border-right: 1px solid #000;
    border-bottom: 1px solid #000;
}
tr:nth-child(even) td {
    height: 16px;
}
td:first-child {
    background: #f8fcff;
    border-right: 1px solid #9fdcfb;
    border-bottom: 2px solid #9fdcfb;
}
td:last-child {
    background: #000;
}
.table-mark {
    position: absolute;
    left: 14px;
    top: 78px;
    color: #f0a070;
    opacity: 0.22;
    font-family: Lato, sans-serif;
    font-style: italic;
    font-weight: 300;
    font-size: 92px;
    line-height: 90px;
    filter: blur(1px);
    pointer-events: none;
}
```
FILE: script.js
```js
// gain, e/ADU, read noise, full well, relative gain, rel. gain (db), dynamic range
const results = [
    ['0', '4.72', '2.99', '19316.82', '1.00', '0.00', '12.00'],
    ['50', '2.42', '2.10', '9920.61', '1.95', '5.79', '12.00'],
    ['59', '2.36', '2.19', '9669.34', '2.00', '6.01', '12.00'],
    ['61', '2.37', '1.57', '9687.86', '1.99', '5.99', '12.00'],
    ['100', '1.51', '1.30', '6179.81', '3.13', '9.90', '12.00'],
    ['119', '1.22', '1.21', '5012.08', '3.85', '11.72', '12.00'],
    ['121', '1.19', '1.20', '4862.30', '3.97', '11.98', '11.98'],
    ['150', '0.86', '1.11', '3540.37', '5.46', '14.74', '11.64'],
    ['200', '0.51', '1.04', '2084.61', '9.27', '19.34', '10.97'],
    ['250', '0.29', '0.93', '1178.50', '16.39', '24.29', '10.30'],
    ['300', '0.16', '0.86', '665.58', '29.02', '29.25', '9.59'],
    ['350', '0.09', '0.81', '377.60', '51.16', '34.18', '8.86'],
    ['400', '0.05', '0.78', '208.83', '92.50', '39.32', '8.07'],
    ['450', '0.03', '0.75', '115.86', '166.72', '44.44', '7.27'],
    ['500', '0.02', '0.69', '64.00', '301.85', '49.60', '6.55'],
    ['', '', '', '', '', '', '']
];

const rows = document.getElementById('rows');
const points = document.getElementById('points');

function addPoint(type, gain, value) {
    const x = Math.round(51 + gain * 0.463);
    const y = Math.round(531 - value * 109.8);
    const path = document.createElementNS('http://www.w3.org/2000/svg', 'path');
    path.setAttribute('class', type);
    path.setAttribute('d', type === 'gain'
        ? `M${x - 5} ${y}h10M${x} ${y - 5}v10`
        : `M${x - 5} ${y - 5}l10 10M${x + 5} ${y - 5}l-10 10`);
    points.appendChild(path);
}

results.forEach(r => {
    const tr = document.createElement('tr');
    ['', ...r, ''].forEach(text => {
        const td = document.createElement('td');
        td.textContent = text;
        tr.appendChild(td);
    });
    rows.appendChild(tr);
    if (r[0] !== '') {
        addPoint('gain', Number(r[0]), Number(r[1]));
        addPoint('noise', Number(r[0]), Number(r[2]));
    }
});
```
